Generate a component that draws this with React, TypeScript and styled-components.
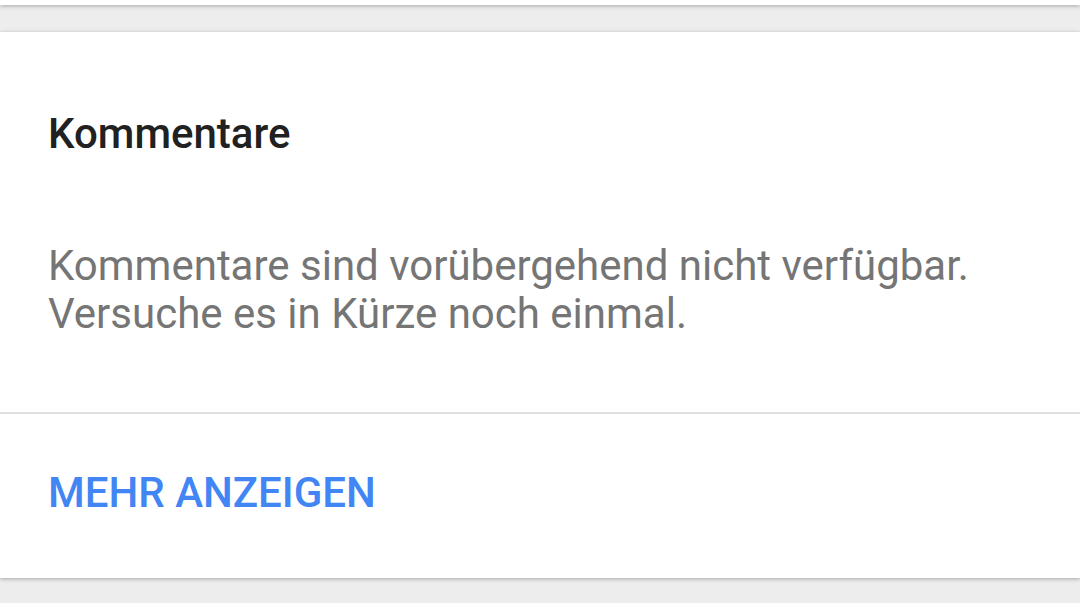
import { createGlobalStyle } from "styled-components";
import styled from "styled-components";

const GlobalStyle = createGlobalStyle`
  html, body {
    margin: 0;
    padding: 0;
    background: #ededed;
    font-family: Roboto, "Noto Sans", "Liberation Sans", sans-serif;
  }
`;

const Page = styled.div`
  width: 1080px;
  height: 603px;
  overflow: hidden;
  background: #ededed;
  display: flex;
  flex-direction: column;
`;

// bottom of the card above, only its shadow edge is visible
const PrevCard = styled.div`
  height: 5px;
  background: #fff;
  box-shadow: 0 1px 4px rgba(0, 0, 0, 0.3);
  flex-shrink: 0;
`;

const Card = styled.section`
  margin-top: 27px;
  height: 546px;
  background: #fff;
  box-shadow: 0 1px 4px rgba(0, 0, 0, 0.3);
  display: flex;
  flex-direction: column;
  flex-shrink: 0;
`;

const Body = styled.div`
  padding: 78px 48px 0;
  height: 302px;
`;

const Title = styled.h2`
  margin: 0;
  font-size: 42px;
  font-weight: 500;
  color: #212121;
  line-height: 48px;
`;

const Message = styled.p`
  margin: 84px 0 0;
  font-size: 42px;
  font-weight: 400;
  color: #757575;
  line-height: 48px;
`;

const Divider = styled.hr`
  margin: 0;
  border: none;
  height: 2px;
  background: #e0e0e0;
`;

const Footer = styled.div`
  padding: 0 48px 8px;
  height: 156px;
  display: flex;
  align-items: center;
`;

const MoreButton = styled.button`
  border: none;
  background: none;
  padding: 0;
  font-family: inherit;
  font-size: 42px;
  font-weight: 500;
  color: #4285f4;
  cursor: pointer;
`;

export default function App() {
  return (
    <Page>
      <GlobalStyle />
      <PrevCard />
      <Card>
        <Body>
          <Title>Kommentare</Title>
          <Message>
            Kommentare sind vorübergehend nicht verfügbar.
            <br />
            Versuche es in Kürze noch einmal.
          </Message>
        </Body>
        <Divider />
        <Footer>
          <MoreButton>MEHR ANZEIGEN</MoreButton>
        </Footer>
      </Card>
    </Page>
  );
}
